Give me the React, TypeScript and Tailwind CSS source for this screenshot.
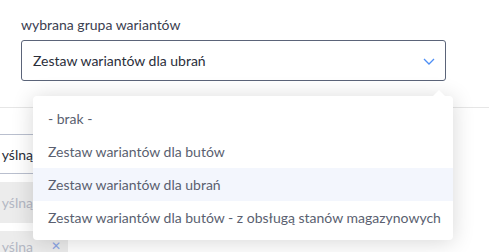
import React from "react";

const font = { fontFamily: "Lato, 'Noto Sans', sans-serif" };

export default function App() {
  const items = [
    "- brak -",
    "Zestaw wariantów dla butów",
    "Zestaw wariantów dla ubrań",
    "Zestaw wariantów dla butów - z obsługą stanów magazynowych",
  ];
  return (
    <div className="relative w-[489px] h-[252px] overflow-hidden bg-white" style={font}>
      <div className="flex flex-col pl-[21px] pr-[43px] pt-[15px]">
        <div className="text-[14px] leading-[20px] text-[#3b4050]">wybrana grupa wariantów</div>
        <div className="mt-[5px] h-[41px] border border-[#5b6479] rounded-[3px] flex items-center justify-between pl-[11px] pr-[8px]">
          <span className="text-[14px] text-[#2a2e3a]">Zestaw wariantów dla ubrań</span>
          <svg width="14" height="10" viewBox="0 0 14 10" className="mr-[1px]">
            <path d="M2 3 L7 8 L12 3" fill="none" stroke="#4d8ef5" strokeWidth="1.3" />
          </svg>
        </div>
      </div>

      {/* background content */}
      <div className="mt-[26px] border-t border-[#e6e6e6] flex flex-col">
        <div className="mt-[26px] w-[33px] h-[40px] border-t border-b border-[#b9bfce] flex items-center justify-end overflow-hidden">
          <span className="text-[14px] text-[#2a2e3a] whitespace-nowrap">yślną</span>
        </div>
        <div className="mt-[8px] w-[33px] h-[41px] bg-[#ececec] flex items-center justify-end overflow-hidden">
          <span className="text-[14px] text-[#b4b8c4] whitespace-nowrap">yślną</span>
        </div>
        <div className="mt-[8px] w-[68px] h-[30px] bg-[#ececec] flex items-start pt-[8px] overflow-hidden">
          <span className="text-[14px] leading-[16px] text-[#b4b8c4] whitespace-nowrap w-[33px] text-right">yślną</span>
          <span className="ml-[18px] text-[12px] leading-[14px] text-[#8aa6e6]">✕</span>
        </div>
      </div>

      {/* dropdown */}
      <div className="absolute left-[33px] top-[96px] w-[420px] rounded-[4px] bg-white py-[6px] shadow-[0_2px_22px_rgba(0,0,0,0.16)]">
        <div className="absolute -top-[6px] left-[406px] w-0 h-0 border-l-[7px] border-r-[7px] border-b-[7px] border-l-transparent border-r-transparent border-b-white -translate-x-1/2" />
        {items.map((t, i) => (
          <div
            key={i}
            className={`h-[33px] flex items-center pl-[15px] text-[14px] text-[#5a5f70] whitespace-nowrap ${i === 2 ? "bg-[#f3f6fd]" : ""}`}
          >
            {t}
          </div>
        ))}
      </div>
    </div>
  );
}
